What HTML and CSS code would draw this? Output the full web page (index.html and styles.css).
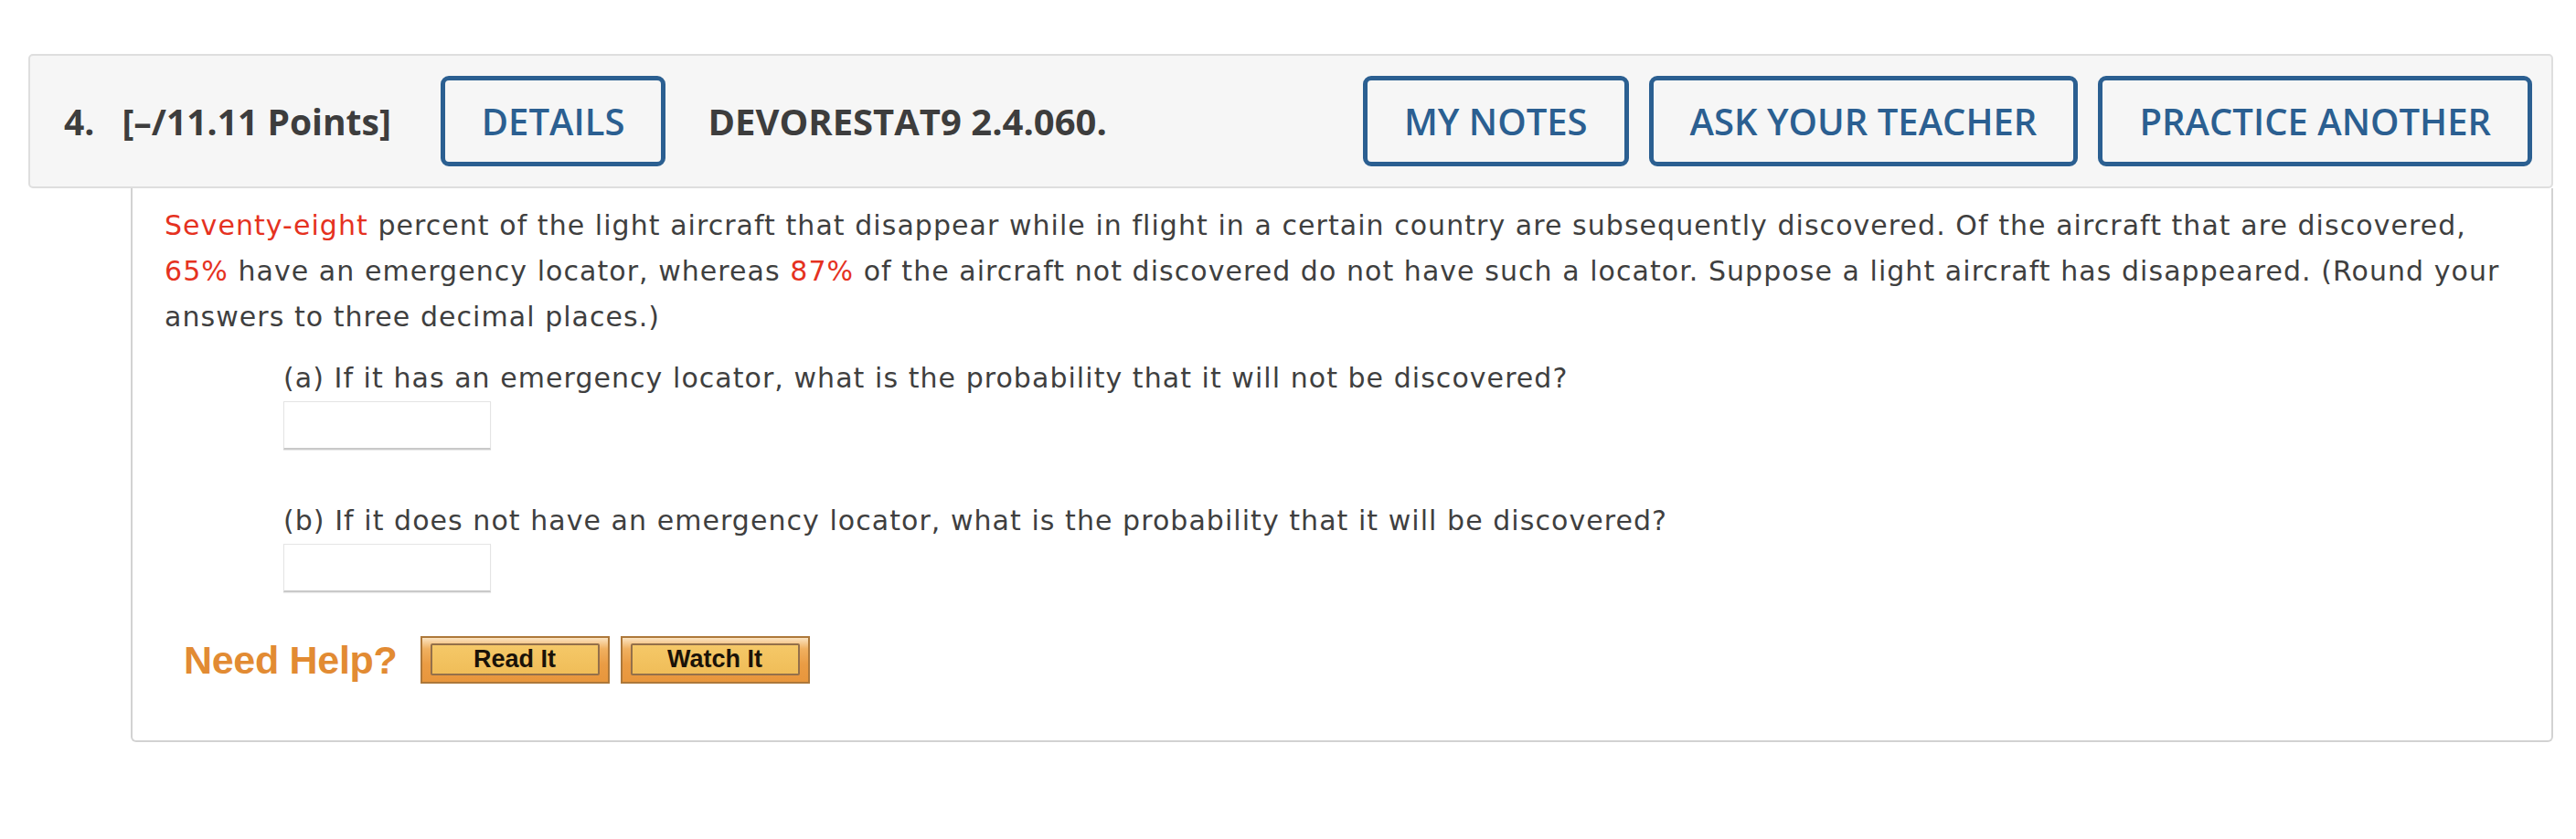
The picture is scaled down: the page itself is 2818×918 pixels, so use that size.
FILE: index.html
```html
<!DOCTYPE html>
<html lang="en">
<head>
<meta charset="utf-8">
<title>Question 4</title>
<link rel="stylesheet" href="styles.css">
</head>
<body>
<div class="page">
  <div class="question">
    <div class="qhead">
      <div class="qhead-left">
        <span class="qnum">4.</span>
        <span class="qpoints">[–/11.11 Points]</span>
        <button class="hbtn">DETAILS</button>
        <span class="qcode">DEVORESTAT9 2.4.060.</span>
      </div>
      <div class="qhead-right">
        <button class="hbtn">MY NOTES</button>
        <button class="hbtn">ASK YOUR TEACHER</button>
        <button class="hbtn">PRACTICE ANOTHER</button>
      </div>
    </div>
    <div class="qbody">
      <p class="stem"><span class="red">Seventy-eight</span> percent of the light aircraft that disappear while in flight in a certain country are subsequently discovered. Of the aircraft that are discovered, <span class="red">65%</span> have an emergency locator, whereas <span class="red">87%</span> of the aircraft not discovered do not have such a locator. Suppose a light aircraft has disappeared. (Round your answers to three decimal places.)</p>
      <div class="part part-a">
        <p class="ptext">(a) If it has an emergency locator, what is the probability that it will not be discovered?</p>
        <input class="answer" type="text">
      </div>
      <div class="part part-b">
        <p class="ptext">(b) If it does not have an emergency locator, what is the probability that it will be discovered?</p>
        <input class="answer" type="text">
      </div>
      <div class="help">
        <span class="help-label">Need Help?</span>
        <span class="helpbtn"><span class="helpbtn-inner">Read It</span></span>
        <span class="helpbtn"><span class="helpbtn-inner">Watch It</span></span>
      </div>
    </div>
  </div>
</div>
</body>
</html>
```

FILE: styles.css
```css
html, body {
  margin: 0;
  padding: 0;
  background: #ffffff;
}

.page {
  padding: 59px 0 0 31px;
}

.question {
  width: 2762px;
}

.qhead {
  box-sizing: border-box;
  height: 147px;
  background: #f6f6f6;
  border: 2px solid #dedede;
  border-radius: 5px;
  display: flex;
  align-items: center;
  justify-content: space-between;
  padding: 0 21px 0 37px;
  font-family: "Open Sans", "Liberation Sans", sans-serif;
}

.qhead-left {
  display: flex;
  align-items: center;
}

.qnum,
.qpoints,
.qcode {
  font-weight: 700;
  font-size: 39px;
  color: #3d3d3d;
  white-space: nowrap;
}

.qnum {
  margin-right: 30px;
}

.qpoints {
  margin-right: 54px;
}

.qcode {
  margin-left: 46px;
  font-size: 40px;
}

.qhead-right {
  display: flex;
  align-items: center;
  gap: 22px;
}

.hbtn {
  box-sizing: border-box;
  height: 99px;
  padding: 0 40px;
  border: 5px solid #2b5f91;
  border-radius: 9px;
  background: transparent;
  color: #2b5f91;
  font-family: "Open Sans", "Liberation Sans", sans-serif;
  font-weight: 600;
  font-size: 40px;
  white-space: nowrap;
}

.qbody {
  box-sizing: border-box;
  margin-left: 112px;
  width: 2650px;
  height: 606px;
  border: 2px solid #d2d2d2;
  border-top: none;
  border-radius: 0 0 6px 6px;
  padding: 16px 36px 0 35px;
  font-family: Verdana, "DejaVu Sans", sans-serif;
  font-size: 30px;
  line-height: 50px;
  letter-spacing: 1.05px;
  color: #3f3f3f;
}

.stem {
  margin: 0;
}

.red {
  color: #e5321f;
}

.part {
  padding-left: 130px;
}

.part-a {
  margin-top: 17px;
}

.part-b {
  margin-top: 53px;
}

.ptext {
  margin: 0;
}

.answer {
  display: block;
  box-sizing: border-box;
  width: 227px;
  height: 53px;
  margin: 0;
  border: 1px solid #e4e4e4;
  border-bottom: 2px solid #c9c9c9;
  background: #ffffff;
  box-shadow: 0 1px 1px rgba(0, 0, 0, 0.08);
}

.help {
  display: flex;
  align-items: center;
  margin-top: 48px;
  padding-left: 21px;
  letter-spacing: 0;
}

.help-label {
  font-family: "Liberation Sans", Arial, sans-serif;
  font-weight: 700;
  font-size: 43px;
  line-height: 52px;
  color: #e28b33;
  margin-right: 25px;
  letter-spacing: -0.3px;
}

.helpbtn {
  box-sizing: border-box;
  display: block;
  width: 207px;
  height: 52px;
  margin-right: 12px;
  padding: 6px 9px 7px;
  border: 2px solid #ad783a;
  background: linear-gradient(#fbe3c0 0%, #f0b060 25%, #ea9c44 60%, #e8963c 100%);
}

.helpbtn-inner {
  box-sizing: border-box;
  display: block;
  height: 100%;
  border: 2px solid #94704a;
  border-radius: 2px;
  background: linear-gradient(#f5c868, #f0bd58);
  font-family: "Liberation Sans", Arial, sans-serif;
  font-weight: 700;
  font-size: 27px;
  line-height: 31px;
  text-align: center;
  color: #1a1208;
}
```
